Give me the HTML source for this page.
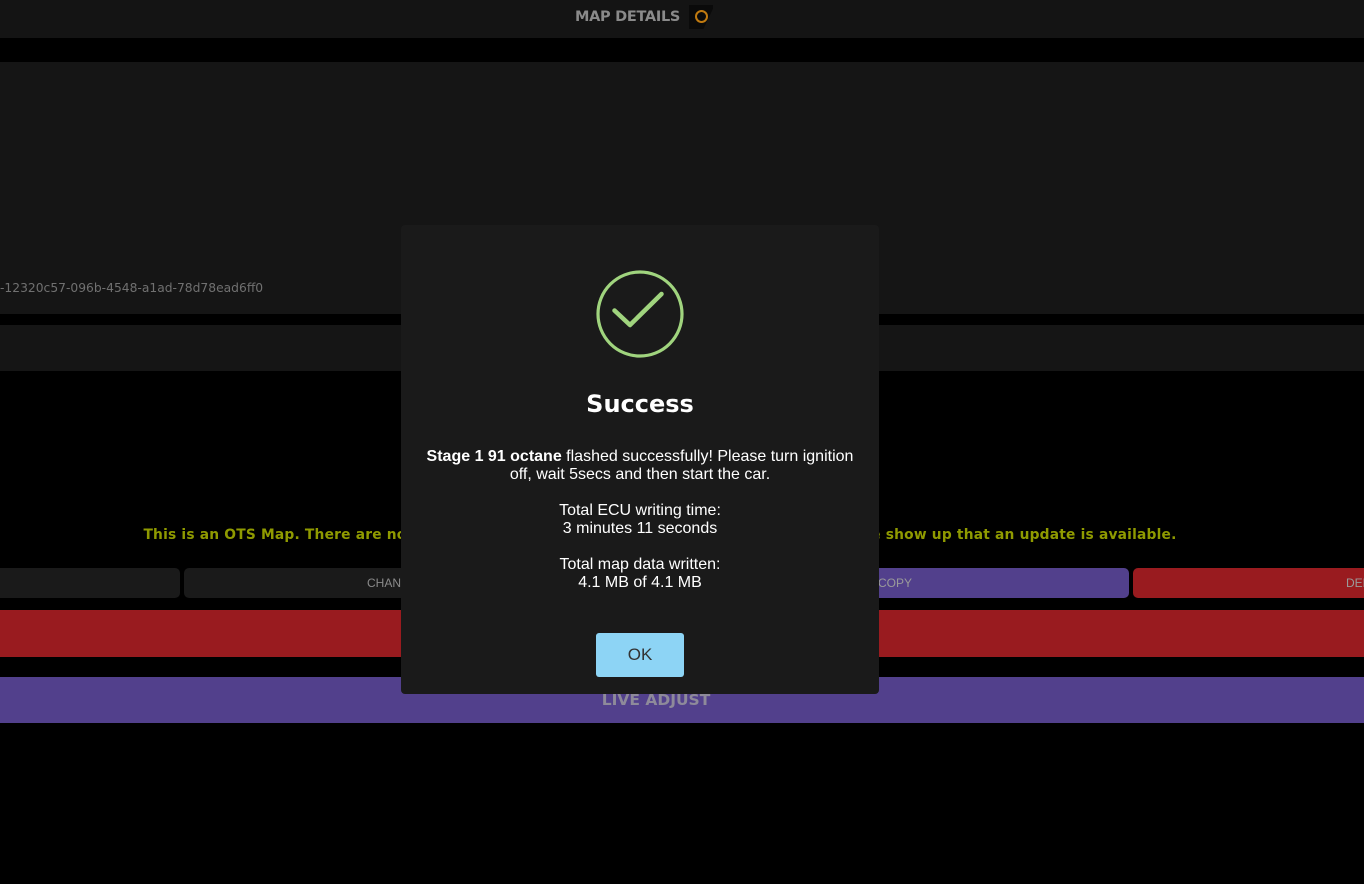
<!DOCTYPE html>
<html><head><meta charset="utf-8"><style>
*{margin:0;padding:0;box-sizing:border-box}
body{width:1364px;height:884px;background:#000;position:relative;overflow:hidden;font-family:"Liberation Sans",sans-serif}
.abs{position:absolute}
.sego{font-family:"DejaVu Sans","Liberation Sans",sans-serif}
</style></head><body>
<div class="abs" style="left:0;top:0;width:1364px;height:38px;background:#141414"></div>
<div class="abs sego" style="left:575px;top:9px;font-size:14.5px;font-weight:bold;color:#8a8a8a;letter-spacing:-0.3px">MAP DETAILS</div>
<div class="abs" style="left:689px;top:5px;width:24px;height:24px;background:#0a0a0a;clip-path:polygon(0 0,100% 0,100% 15%,60% 100%,0 100%)"></div>
<div class="abs" style="left:695px;top:10px;width:13px;height:13px;border:2px solid #c07a10;border-radius:50%"></div>
<div class="abs" style="left:0;top:62px;width:1364px;height:252px;background:#151515"></div>
<div class="abs sego" style="left:0;top:281px;font-size:12.3px;color:#707070">-12320c57-096b-4548-a1ad-78d78ead6ff0</div>
<div class="abs" style="left:0;top:325px;width:1364px;height:46px;background:#151515"></div>
<div class="abs sego" style="left:0;top:527px;width:1320px;text-align:center;font-size:13.8px;font-weight:bold;color:#8f9a00;white-space:nowrap;letter-spacing:0.2px">This is an OTS Map. There are no updates available for this map. You will not see a message show up that an update is available.</div>
<div class="abs" style="left:-10px;top:568px;width:190px;height:30px;background:#1a1a1a;border-radius:5px"></div>
<div class="abs" style="left:184px;top:568px;width:470px;height:30px;background:#1a1a1a;border-radius:5px;color:#8a8a8a;font-size:12px;line-height:30px;padding-left:183px">CHANGE</div>
<div class="abs" style="left:658px;top:568px;width:471px;height:30px;background:#52408c;border-radius:5px;color:#9a9a9a;font-size:12px;line-height:30px;padding-left:220px">COPY</div>
<div class="abs" style="left:1133px;top:568px;width:300px;height:30px;background:#991b1f;border-radius:5px;color:#9a9a9a;font-size:12px;line-height:30px;padding-left:213px">DELETE</div>
<div class="abs" style="left:0;top:610px;width:1364px;height:47px;background:#991b1f"></div>
<div class="abs" style="left:0;top:677px;width:1364px;height:46px;background:#52408c"></div>
<div class="abs sego" style="left:0;top:691px;width:1312px;text-align:center;font-size:15.5px;font-weight:bold;color:#8e8a9a">LIVE ADJUST</div>

<div class="abs" style="left:401px;top:225px;width:478px;height:469px;background:#1a1a1a;border-radius:4px;text-align:center;color:#fff">
<svg class="abs" style="left:195px;top:45px" width="88" height="88" viewBox="0 0 88 88"><circle cx="44" cy="44" r="42" fill="none" stroke="#a0d47e" stroke-width="3.2"/><path d="M18.5 40.5 L34 55 L65.5 24" fill="none" stroke="#a0d47e" stroke-width="4.5" stroke-linecap="round" stroke-linejoin="round"/></svg>
<div class="abs sego" style="left:0;top:165px;width:478px;font-size:24px;font-weight:bold">Success</div>
<div class="abs" style="left:20px;top:223px;width:438px;font-size:16px;line-height:18px">
<b>Stage 1 91 octane</b> flashed successfully! Please turn ignition off, wait 5secs and then start the car.<br><br>Total ECU writing time:<br>3 minutes 11 seconds<br><br>Total map data written:<br>4.1 MB of 4.1 MB</div>
<div class="abs" style="left:195px;top:408px;width:88px;height:44px;background:#8dd4f5;border-radius:3px;color:#333;font-size:17px;line-height:44px">OK</div>
</div>
</body></html>
